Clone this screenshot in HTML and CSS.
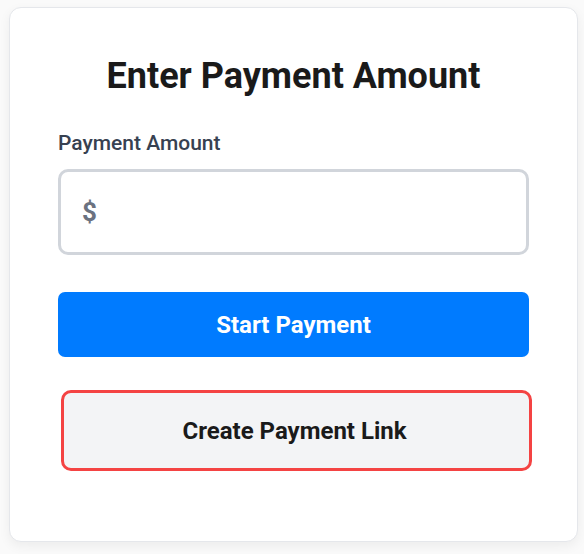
FILE: index.html
```html
<!DOCTYPE html>
<html>
<head>
<meta charset="utf-8">
<link rel="stylesheet" href="styles.css">
</head>
<body>
<div class="page">
  <div class="card">
    <h1 class="title">Enter Payment Amount</h1>
    <label class="label">Payment Amount</label>
    <div class="input-box"><span class="currency">$</span></div>
    <button class="btn btn-primary">Start Payment</button>
    <button class="btn btn-link">Create Payment Link</button>
  </div>
</div>
</body>
</html>
```
FILE: styles.css
```css
html, body {
  margin: 0;
  padding: 0;
  background: #fafafa;
}
.page {
  padding: 7px 6px 12px 9px;
  font-family: Roboto, "Liberation Sans", sans-serif;
}
.card {
  box-sizing: border-box;
  width: 569px;
  height: 535px;
  background: #ffffff;
  border: 1px solid #e5e7eb;
  border-radius: 12px;
  box-shadow: 0 4px 12px rgba(0, 0, 0, 0.06);
  padding: 0 48px;
  display: flex;
  flex-direction: column;
}
.title {
  margin: 46px 0 0 0;
  text-align: center;
  font-size: 36px;
  font-weight: 700;
  color: #1a1a1a;
  line-height: 44px;
}
.label {
  margin-top: 33px;
  font-size: 21px;
  font-weight: 500;
  color: #374151;
  line-height: 24px;
}
.input-box {
  box-sizing: border-box;
  margin-top: 14px;
  height: 86px;
  border: 3px solid #d1d5db;
  border-radius: 10px;
  display: flex;
  align-items: center;
  padding-left: 21px;
}
.currency {
  font-size: 26px;
  font-weight: 700;
  color: #6b7280;
}
.btn {
  box-sizing: border-box;
  width: 471px;
  font-family: Roboto, "Liberation Sans", sans-serif;
  font-size: 24px;
  font-weight: 700;
  cursor: pointer;
}
.btn-primary {
  margin-top: 37px;
  height: 65px;
  background: #007bff;
  color: #ffffff;
  border: none;
  border-radius: 7px;
}
.btn-link {
  margin-top: 33px;
  margin-left: 3px;
  height: 81px;
  padding-right: 10px;
  background: #f3f4f6;
  color: #1a1a1a;
  border: 3px solid #f44343;
  border-radius: 10px;
}
```
